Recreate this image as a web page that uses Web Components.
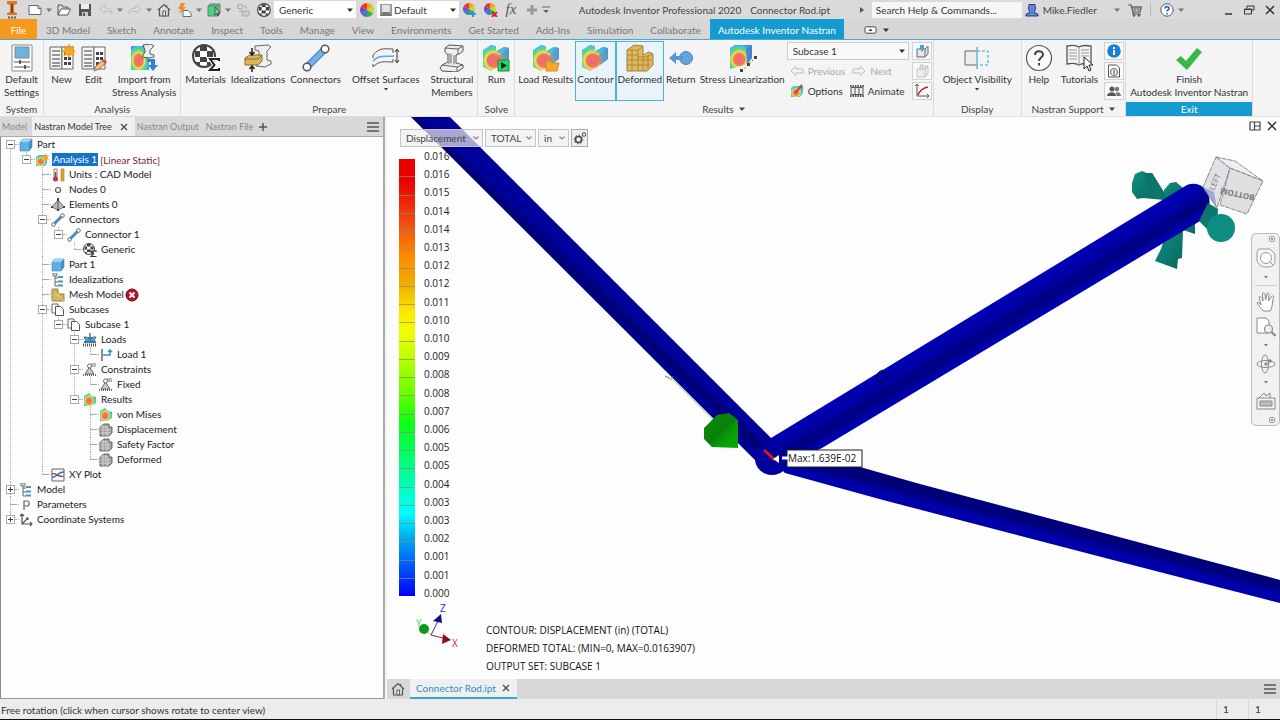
<!DOCTYPE html>
<html lang="en">
<head>
<meta charset="utf-8">
<title>Autodesk Inventor Professional 2020</title>
<style>
    html, body {
        height: 100%;
        margin: 0;
    }
    body {
        font: 10px/14px Lato, "Open Sans", sans-serif;
        color: #333;
        overflow: hidden;
    }
</style>
</head>
<body>
<inventor-app></inventor-app>

<script>
// ---------- icons ----------
const RAINBOW = '<defs><radialGradient id="rb" cx=".42" cy=".6" r=".65"><stop offset="0" stop-color="#ee6a6a"/><stop offset=".38" stop-color="#f07a60"/><stop offset=".5" stop-color="#f5e04a"/><stop offset=".68" stop-color="#57d984"/><stop offset=".85" stop-color="#41c4e4"/><stop offset="1" stop-color="#4f8fd8"/></radialGradient></defs>';
const WHEEL = (r) => `<g transform="translate(${r} ${r}) scale(${r / 7})"><path fill="#e8382f" d="M0 0L0-7A7 7 0 0 0-6-3.500z"/><path fill="#f5a31d" d="M0 0L0-7A7 7 0 0 1 6-3.500z"/><path fill="#c4d92e" d="M0 0L6-3.500A7 7 0 0 1 6 3.500z"/><path fill="#2fb34a" d="M0 0L6 3.500A7 7 0 0 1 0 7z"/><path fill="#2f7fd8" d="M0 0L0 7A7 7 0 0 1-6 3.500z"/><path fill="#8a3fc0" d="M0 0L-6 3.500A7 7 0 0 1-6-3.500z"/></g>`;
const BALL = '<circle cx="12" cy="12" r="11" fill="#fff" stroke="#444" stroke-width="2"/><path fill="#444" d="M8 2h7v5H8zM3 7h5v6H3zM15 7h6v6h-6zM8 13h7v5H8zM4 18h4v3H4zM15 18h4v3h-4z"/>';
const SHEET = '<path d="M1 3h12v22H1z" fill="#f4f4f4" stroke="#666"/><path d="M3 7h8M3 11h8M3 15h8M3 19h8M3 22h8" stroke="#777" stroke-width="1.500"/><path d="M13 3h11v22H13z" fill="#fff" stroke="#666"/><path fill="#444" d="M15 8h3v3h-3zM19 8h3v3h-3zM15 13h3v3h-3zM19 13h3v3h-3zM15 18h3v3h-3zM19 18h3v3h-3z"/>';
const BEAM = '<path d="M7 4l4-3 14 1v5l-4 3-3 1v8l7 2v3l-6 4-15-1-2-3 2-3 6-3v-7L7 8z" fill="#eee" stroke="#555"/><path d="M7 4l13 1 5-3M20 5v5M4 21l15 2 6-2M19 23v5" fill="none" stroke="#666"/><path d="M10 9l4 1v9l-4 1zM15 11l3 0v8l-3 2z" fill="#a8a8a8"/>';
const BLOCK = RAINBOW + '<path d="M1 6l8-5 5 1v5l8-4 5 1v11l-9 7-9 5-8-4z" fill="url(#rb)"/><path d="M14 8l8-5 5 1-8 6z" fill="#45b8e0" opacity=".8"/><path d="M27 4v11l-8 6V10z" fill="#5b8fce" opacity=".75"/><path d="M7 12c3-3 6-1 7 0 2 1 3 0 5-2v7c-3 4-9 6-12 3-2-2-2-6 0-8z" fill="#ec6f6c" opacity=".8"/>';
const PAPERS = '<path d="M1 1h6v3M1 1v9h3" fill="none" stroke="#666"/><path d="M4.500 3.500h5l3 3v6h-8z" fill="#fff" stroke="#555"/>';
const SUPPORT = '<path d="M6.500 4L2 11h9z" fill="#ccc" stroke="#666"/><circle cx="6.500" cy="3" r="2" fill="#fff" stroke="#666"/><path d="M8 1h5M8 3h5" stroke="#777"/><path d="M0 12h13" stroke="#666" stroke-width="2" stroke-dasharray="1 1"/>';
const MESH = '<path d="M1 4l4-3h5v3h3v6l-3 3H1z" fill="#999" stroke="#666"/><path d="M1 4h8v9M1 7h11M1 10h11M4 2v11M7 2v11" stroke="#ddd" fill="none" stroke-width=".8"/>';

const ICONS = {
    inventor: [14, 18, '<path d="M2 0h10v3L9 4v7l3 1v2H2v-2l3-1V4L2 3z" fill="#d9772b"/><path d="M6 3h2v9H6z" fill="#8f4312"/><path d="M3 16.500h2M6 16.500h2M9 16.500h2" stroke="#555" stroke-width="2"/>'],
    newdoc: [14, 14, '<path d="M1 2.500h9l3 3v6H1z" fill="#fff" stroke="#666"/><path d="M10 2.500v3h3" fill="none" stroke="#666"/>'],
    open: [14, 14, '<path d="M1 12V2h4l1 2h5v3" fill="none" stroke="#555"/><path d="M1 12l3-6h9.500l-3 6z" fill="#fff" stroke="#555"/>'],
    save: [14, 14, '<path d="M1 1h12v12H1z" fill="#555"/><path d="M3 1h8v5H3z" fill="#eee"/><path d="M4 9h6v4H4z" fill="#ccc"/><path d="M5 10h2v3H5z" fill="#555"/>'],
    undo: [14, 14, '<path d="M1 6l5-4v3c5 0 7 2 7 6-2-3-4-3-7-3v2z" fill="#ddd" stroke="#bbb"/>'],
    redo: [14, 14, '<path d="M13 6L8 2v3C3 5 1 7 1 11c2-3 4-3 7-3v2z" fill="#ddd" stroke="#bbb"/>'],
    home: [14, 14, '<path d="M1 7l6-5.500L13 7M2.500 6.500v6.500h9V6.500M9.500 2v2" fill="none" stroke="#555" stroke-width="1.200"/><path d="M6 8h2.500v5H6z" fill="#fff" stroke="#555"/>'],
    bolt: [15, 14, '<path d="M4 0h4L6 4h3L2 11l2-5H1z" fill="#f08a1d"/><path d="M6 7.500h5l3 3v3H6z" fill="#fff" stroke="#666"/>'],
    body: [14, 14, '<path d="M1 3l2-2h10v9l-2 3H1z" fill="#3fd97c" stroke="#777"/><path d="M10 3v10M1 3h9l2-2" fill="none" stroke="#777"/><path d="M8 4v8l2-2 1 3 1-1-1-2h2z" stroke="#333" fill="#bbb" stroke-width=".7"/>'],
    chain: [14, 14, '<path d="M2 1.500h4v4H2zM7 3h3v3M3 8h3" fill="none" stroke="#aaa"/><path d="M6 8h7v5H6z" fill="#ccc" stroke="#aaa"/>'],
    ball: [14, 14, '<g transform="scale(.58)">' + BALL + '</g>'],
    wheel: [14, 14, WHEEL(7)],
    wheelAdd: [14, 14, WHEEL(6) + '<path d="M10 8v6M7 11h6" stroke="#3b8fd6" stroke-width="2"/>'],
    wheelDel: [14, 14, WHEEL(6) + '<path d="M8 9l5 5M13 9l-5 5" stroke="#dd2222" stroke-width="2"/>'],
    swatch: [12, 12, '<path d="M0 0h12v12H0z" fill="#9a9a9a"/><path d="M2 1h8v7H2z" fill="#e2e2e2"/><path d="M0 12l3-4h6l3 4z" fill="#777"/>'],
    plus: [14, 14, '<path d="M7 2v10M2 7h10" stroke="#999" stroke-width="3"/>'],
    plusThin: [10, 10, '<path d="M5 1v8M1 5h8" stroke="#555" stroke-width="1.500"/>'],
    caret: [8, 8, '<path d="M1 2.500h6L4 6z" fill="currentColor"/>'],
    caretSm: [6, 6, '<path d="M1 2h4L3 4.500z" fill="currentColor"/>'],
    chevron: [8, 8, '<path d="M1.500 2.500L4 5l2.500-2.500" fill="none" stroke="#888" stroke-width="1.200"/>'],
    caretBar: [8, 8, '<path d="M0 1h8" stroke="#666"/><path d="M1 4h6L4 7z" fill="#666"/>'],
    right: [8, 8, '<path d="M3 1l4 3-4 3z" fill="#555"/>'],
    user: [14, 14, '<path d="M4 1.500h6l.5 5-1.500 3 4 1.500v2H1v-2L5 9.500l-1.500-3z" fill="#5f86d6" stroke="#27407f"/>'],
    cart: [14, 14, '<path d="M0 2h3l2 7h7l1.500-5H4M5 9v2h8" fill="none" stroke="#555" stroke-width="1.200"/><path d="M4 4h9M5 6h8M7 4v5M10 4v5" stroke="#777"/><circle cx="6" cy="12.500" r="1.200" fill="#555"/><circle cx="11" cy="12.500" r="1.200" fill="#555"/>'],
    helpBlue: [14, 14, '<circle cx="7" cy="7" r="6.200" fill="#fff" stroke="#556"/><path d="M5 5.500C5 3 9 3 9 5.500 9 7 7 7 7 8.500M7 10v1.500" fill="none" stroke="#2462c8" stroke-width="1.600"/>'],
    min: [14, 14, '<path d="M4 11h7" stroke="#333" stroke-width="1.500"/>'],
    restore: [14, 14, '<path d="M5 5V3h7v4h-2" fill="none" stroke="#333"/><path d="M2.500 6h7v5h-7z" fill="none" stroke="#333"/><path d="M2.500 6.500h7" stroke="#333"/>'],
    close: [14, 14, '<path d="M3 3l8 8M11 3l-8 8" stroke="#333" stroke-width="1.500"/>'],
    closeSm: [10, 10, '<path d="M2 2l6 6M8 2L2 8" stroke="#444" stroke-width="1.200"/>'],
    ribbonState: [14, 8, '<rect x="1" y=".8" width="11" height="6.400" rx="1.500" fill="#fff" stroke="#444"/><path d="M4.500 5h4l-2-2.500z" fill="#333"/>'],

    settings: [26, 28, '<path d="M3 1h20v26H3z" fill="#fff" stroke="#888"/><path d="M6 3h14v11H6z" fill="#6ab4e4" stroke="#888"/><path d="M5 18h16M5 23h16" stroke="#555"/><path d="M11 16v4M16 21v4" stroke="#333" stroke-width="1.500"/>'],
    analysisNew: [26, 28, SHEET + '<path d="M20 0l1.500 4L25 2l-1 4 3 1-3 2 1 3-3.500-1.500L20 14l-1.500-3.500L15 12l1-3-3-2 3-1-1-4 3.500 2z" fill="#f5a623" stroke="#d98a10" stroke-width=".5"/>'],
    analysisEdit: [26, 28, SHEET + '<path d="M13 27l2-5 7-6 3 3-7 6z" fill="#f3c36a" stroke="#a66"/><path d="M21 17l2-2 3 3-2 2z" fill="#d04848"/>'],
    importStress: [28, 28, RAINBOW + '<path d="M1 2h18v24H1z" fill="url(#rb)"/><path d="M13 1l8-1 3 2-4 4v4l4 1v2l-5 1-7-1 3-5V6z" fill="#eee" stroke="#555"/><path d="M17 15h8v6h3l-5 6-5-6h3v-3h-4z" fill="#2f83d6"/>'],
    materials: [28, 28, '<g>' + BALL + '</g><path d="M27 17v-2h-9l4.500 6L18 26h9v-2" fill="none" stroke="#fff" stroke-width="4"/><path d="M27 17v-2h-9l4.500 6L18 26h9v-2" fill="none" stroke="#222" stroke-width="2"/>'],
    idealize: [28, 28, '<path d="M11 2l13-1 3 2-4 4v9l4 1v3l-6 3-9-1 3-6V7l-4-1z" fill="#eee" stroke="#666"/><path d="M1 14l5-3h12v6l-4 4H1z" fill="#d9b65c" stroke="#8a6d28"/><path d="M1 15h13l4-4" fill="none" stroke="#8a6d28"/><path d="M8 4v6M5.500 8L8 11l2.500-3M8 28v-6M5.500 25L8 22l2.500 3" fill="none" stroke="#222" stroke-width="1.500"/>'],
    connector: [28, 28, '<path d="M6 22L22 6" stroke="#4a7fb5" stroke-width="7"/><path d="M6 22L22 6" stroke="#6fb1ea" stroke-width="5"/><circle cx="5" cy="23" r="3.800" fill="#fff" stroke="#555" stroke-width="1.500"/><circle cx="23" cy="5" r="3.800" fill="#fff" stroke="#555" stroke-width="1.500"/>'],
    offset: [28, 28, '<path d="M1 11c7-8 11-6 20-6v4M1 23c7-7 11-5 20-5v-3M1 11v3M1 23v-3" fill="none" stroke="#555"/><path d="M1 17c7-7 11-4 21-5" fill="none" stroke="#5aa7e0" stroke-width="1.500"/><path d="M25 6v12M23 8l2-3 2 3M23 16l2 3 2-3" fill="none" stroke="#333"/>'],
    beam: [28, 28, BEAM],
    run: [28, 28, BLOCK + '<path d="M16 16h11v11H16z" fill="#33d164" stroke="#1a8a3a"/><path d="M19 18v7l6-3.500z" fill="#0b2a12"/>'],
    load: [28, 28, BLOCK + '<path d="M14 17h5l1 2h7l-2 8H14z" fill="#f5a92e" stroke="#d98c14"/>'],
    contour: [28, 28, BLOCK],
    deformed: [28, 28, '<path d="M1 6l7-5 9 1v9l6-3 4 2v11l-6 6H1z" fill="#dcb85f" stroke="#a5822f"/><path d="M1 11h11M1 16h25M1 21h23M6 5v22M12 6v21M17 12v15M22 11v14M1 6h11l5-4M12 13h8l7-3" fill="none" stroke="#a5822f" stroke-width=".8"/>'],
    back: [26, 28, '<circle cx="18" cy="14" r="6.500" fill="#64a5dc" stroke="#4886c0"/><path d="M15 12v4H8v4L1 14l7-6v4z" fill="#5499d8"/>'],
    linear: [30, 28, RAINBOW + '<path d="M3 4l5-3h17v13l-4 6L3 25z" fill="url(#rb)"/><path d="M19 5l6-4v13l-5 6z" fill="#4a86d0"/><path d="M15 27l13-13" stroke="#555" stroke-dasharray="1.500 2"/><path d="M13 25h3v3h-3zM20 19h3v3h-3zM27 12h3v3h-3z" fill="#444"/>'],
    prev: [14, 12, '<path d="M1 6l5-4.500V4h7v4H6v2.500z" fill="#f4f4f4" stroke="#bbb"/>'],
    next: [14, 12, '<path d="M13 6L8 1.500V4H1v4h7v2.500z" fill="#f4f4f4" stroke="#bbb"/>'],
    options: [14, 14, RAINBOW + '<path d="M1 4l3-2h9v7l-3 4H1z" fill="url(#rb)"/><path d="M5 9l7-8" stroke="#c44" stroke-width="2"/>'],
    film: [14, 12, '<path d="M0 1h14M0 11h14" stroke="#555" stroke-width="2" stroke-dasharray="1.500 1"/><path d="M1 2.500h12v7H1zM5 2.500v7M9 2.500v7" fill="#eee" stroke="#555"/>'],
    probe: [14, 14, '<path d="M2 5h8v8H2zM10 5l3-3v8l-3 3" fill="#e8e8e8" stroke="#666"/><path d="M5 1h4v4L7 8 5 5z" fill="#4f9fd8"/>'],
    probes: [14, 14, '<path d="M2 5h8v8H2zM10 5l3-3v8l-3 3" fill="#eee" stroke="#c4c4c4"/><path d="M5 1h3v5H5zM9 1l4 4M13 1L9 5" stroke="#c4c4c4" fill="#ddd"/>'],
    plot: [14, 14, '<path d="M2 0v12h12M0 2l2-2 2 2M12 10l2 2-2 2" fill="none" stroke="#555"/><path d="M3 11C5 6 8 4 13 3" fill="none" stroke="#b32828" stroke-width="1.500"/>'],
    visibility: [28, 28, '<path d="M13 7H2v14h11" fill="#eee" stroke="#666"/><path d="M14 7h11v14H14" fill="none" stroke="#2fa0d8" stroke-dasharray="3 2"/><path d="M14 3v22" stroke="#2f8fd0"/>'],
    help: [28, 28, '<circle cx="14" cy="14" r="12.500" fill="#fafafa" stroke="#555" stroke-width="1.200"/><path d="M10 11c0-5 8-5 8-.5 0 3-4 3-4 6.500M14 19v2.500" fill="none" stroke="#444" stroke-width="2"/>'],
    book: [28, 28, '<path d="M2 2c5-1 9-1 12 1 3-2 6-2 12-1v18c-6-1-9-1-12 1-3-2-7-2-12-1z" fill="#f4f4f4" stroke="#555" stroke-width="1.300"/><path d="M14 3v18M4 6h8M4 9h8M4 12h8M4 15h8M16 6h8M16 9h8M16 12h8" stroke="#999"/><path d="M19 13v12l3-3 2 5 2-1-2-5h4z" fill="#fff" stroke="#222"/>'],
    info: [14, 14, '<circle cx="7" cy="7" r="6.800" fill="#1c7fd4"/><path d="M7 6v5M7 3v2" stroke="#fff" stroke-width="2"/>'],
    docInfo: [14, 14, '<path d="M1.500 1h8l3 3v9h-11z" fill="#fff" stroke="#555"/><circle cx="7" cy="8" r="3.500" fill="none" stroke="#555"/><path d="M7 6v4" stroke="#555" stroke-width="1.200"/>'],
    people: [14, 14, '<circle cx="5" cy="5" r="2.500" fill="#555"/><path d="M0 12c0-5 9-5 9 0z" fill="#555"/><circle cx="10" cy="5" r="2.200" fill="#777"/><path d="M9.500 12c0-2-.5-3-1-3.500 3-1 5.500.5 5.500 3.500z" fill="#777"/>'],
    check: [28, 28, '<path d="M1 16l5-4 5 5L22 4l5 4-15 18z" fill="#34b94a"/>'],

    cube: [14, 14, '<path d="M1 4l3-3h9v8l-3 4H1z" fill="#5fb0e6" stroke="#3d87bd" stroke-width=".6"/><path d="M1 4l3-3h9l-3 3z" fill="#9bd2f5"/><path d="M10 4l3-3v8l-3 4z" fill="#3f8fcb"/>'],
    study: [14, 14, RAINBOW + '<path d="M1 4l3-2h8v8l-2 3H1z" fill="url(#rb)"/><path d="M10 0l1 2.500L14 2l-1.500 2.500L14 7l-3-1-2 2V5L6.500 4 9 3z" fill="#f5a623"/>'],
    units: [14, 14, '<path d="M3 1h3v8H3z" fill="#eee" stroke="#888"/><path d="M4.500 4v6" stroke="#b33" stroke-width="1.500"/><circle cx="4.500" cy="11" r="2.500" fill="#b33a3a"/><path d="M10 1h3v12h-3z" fill="#e0a030" stroke="#a87818" stroke-width=".6"/>'],
    node: [14, 14, '<circle cx="7" cy="7" r="2.500" fill="#fff" stroke="#555" stroke-width="1.200"/>'],
    element: [14, 14, '<path d="M7 2l6 7-6 3-6-3z" fill="#bbb" stroke="#666"/><path d="M7 2v10" stroke="#555"/><path d="M6 0h2v3H6zM0 8h2v2H0zM12 8h2v2h-2zM6 11h2v2H6z" fill="#444"/>'],
    connectorSm: [14, 14, '<path d="M3 11l8-8" stroke="#4a8cc4" stroke-width="3"/><circle cx="2.500" cy="11.500" r="1.800" fill="#fff" stroke="#666"/><circle cx="11.500" cy="2.500" r="1.800" fill="#fff" stroke="#666"/>'],
    materialSm: [14, 14, '<g transform="scale(.5)">' + BALL + '</g><path d="M13 9V8H8l2.500 3L8 13.500h5.500" fill="none" stroke="#333" stroke-width="1.200"/>'],
    struct: [14, 14, '<path d="M2 0h4v3H2z" fill="#ddd" stroke="#777"/><path d="M4 3v10h3M4 5h3M4 9h3" fill="none" stroke="#666"/><path d="M7 4h5M7 8.500h5M7 12.500h5" stroke="#4d94c8" stroke-width="2.200"/>'],
    meshModel: [14, 14, '<path d="M1 1h6v5h6v7H1z" fill="#cdb05a" stroke="#9b8136"/><path d="M1 1l12 12M1 7l6-1M7 6v7M1 13l6-7 6 7" stroke="#e8d592" stroke-width=".7" fill="none"/>'],
    papers: [14, 14, PAPERS],
    loads: [14, 14, '<path d="M7 0v6M5 4l2 3 2-3" fill="none" stroke="#222"/><path d="M1 4h3l3 3 3-3h3l-2 4H3z" fill="#5aa7d8" stroke="#3a7fb0"/><path d="M1 9h12" stroke="#3a7fb0" stroke-width="2"/><path d="M0 12h14" stroke="#555" stroke-width="3" stroke-dasharray="1 1"/>'],
    load1: [14, 14, '<path d="M3 1v12" stroke="#666" stroke-width="1.500"/><path d="M4 7h7V2M9 4l2-2 2 2" stroke="#3a8fb8" stroke-width="1.500" fill="none"/>'],
    support: [14, 14, SUPPORT],
    results: [14, 14, RAINBOW + '<path d="M1 3l5-3 3 3 4 1v6l-5 3H1z" fill="url(#rb)"/>'],
    mesh: [14, 14, MESH],
    xy: [14, 14, '<path d="M1 1h12v12H1z" fill="#f6fbff" stroke="#666"/><path d="M1 9c4 2 6-6 12-5" fill="none" stroke="#3a6fb8" stroke-width="1.500"/><path d="M1 6c4-2 6 4 12 2" fill="none" stroke="#b33" stroke-width="1.300"/>'],
    param: [14, 14, '<path d="M5 12V3h3c3 0 3 5 0 5H5" fill="none" stroke="#666" stroke-width="1.200"/>'],
    coords: [14, 14, '<path d="M3 1v10h10M1 3l2-2 2 2M11 9l2 2-2 2M3 11l6-6M7 5h2v2" fill="none" stroke="#555" stroke-width="1.200"/>'],
    error: [14, 14, '<circle cx="7" cy="7" r="6" fill="#b3141f" stroke="#700a10"/><path d="M4.500 4.500l5 5M9.500 4.500l-5 5" stroke="#fff" stroke-width="2"/>'],

    menu: [14, 14, '<path d="M1 3h12M1 7h12M1 11h12" stroke="#555" stroke-width="1.500"/>'],
    gears: [14, 14, '<circle cx="5.500" cy="8.500" r="3" fill="none" stroke="#444" stroke-width="1.500"/><circle cx="5.500" cy="8.500" r="4.300" fill="none" stroke="#444" stroke-dasharray="1.500 1.800"/><circle cx="11" cy="3.500" r="1.800" fill="none" stroke="#444"/>'],
    tile: [12, 10, '<path d="M1 1h10v8H1zM5.500 1v8M5.500 5h5.500" fill="none" stroke="#444" stroke-width="1.200"/>'],
    dot: [8, 8, '<circle cx="4" cy="4" r="2.800" fill="#eee" stroke="#999"/><path d="M3 3l2 2M5 3L3 5" stroke="#999"/>'],
    steer: [20, 20, '<path d="M4 1h10l5 5v7c0 4-3 6-8 6S1 17 1 11V5c0-2 1-4 3-4z" fill="#f6f6f6" stroke="#999"/><circle cx="10" cy="10" r="5.500" fill="#fff" stroke="#999"/><path d="M14 14l3 3" stroke="#999"/>'],
    hand: [20, 20, '<path d="M8 19c-3-2-5-5-7-8 1-1 3 0 4 2L3 5c1-1 2 0 3 1l1 3-.5-7C7 .5 8.500 1 9 2l.5 6L11 1.500c1-1 2 0 2 1L12.500 9 16 4c1-.5 2 .5 1.500 1.500C16 10 17 15 14 19z" fill="#fff" stroke="#888"/>'],
    zoom: [20, 20, '<path d="M1 1h9l3 3v12H1z" fill="#fff" stroke="#888"/><circle cx="12.500" cy="12" r="4" fill="#eee" stroke="#888" stroke-width="1.200"/><path d="M15.500 15l4 4" stroke="#888" stroke-width="2.200"/>'],
    orbit: [20, 20, '<ellipse cx="9" cy="10" rx="3.500" ry="9" fill="none" stroke="#888"/><ellipse cx="10" cy="10" rx="9" ry="3.500" fill="none" stroke="#888"/><path d="M8 10h4M10 8v4M14 5v4M12 7h4" stroke="#777"/>'],
    look: [20, 20, '<path d="M1 7h18v11H1z" fill="#f2f2f2" stroke="#888"/><path d="M4 10h12v5H4z" fill="#bbb" stroke="#888"/><path d="M3 7l5-5 2 3 4-3v5" fill="none" stroke="#888"/>'],
};

class UiIcon extends HTMLElement {
    constructor() {
        super();
        this.attachShadow({mode: 'open'});
    }
    connectedCallback() {
        const [w, h, body] = ICONS[this.getAttribute('name')];
        this.shadowRoot.innerHTML = `
            <style>
                :host { display: inline-flex; flex: none; }
                svg { display: block; }
            </style>
            <svg width="${w}" height="${h}" viewBox="0 0 ${w} ${h}" aria-hidden="true">${body}</svg>
        `;
    }
}
customElements.define('ui-icon', UiIcon);

// ---------- small controls ----------
class UiSelect extends HTMLElement {
    constructor() {
        super();
        this.attachShadow({mode: 'open'});
    }
    connectedCallback() {
        const icon = this.getAttribute('icon');
        this.shadowRoot.innerHTML = `
            <style>
                :host { display: flex; align-items: center; box-sizing: border-box; background: #fff; padding-right: 2px; }
                label { display: flex; align-items: center; flex: 1; min-width: 0; padding-left: 3px; }
                select { appearance: none; flex: 1; min-width: 0; border: 0; margin: 0; padding: 0 2px; background: transparent; font: inherit; color: inherit; outline-color: #1d9fd2; }
                .caret { pointer-events: none; }
            </style>
            <label>${icon ? `<ui-icon name="${icon}"></ui-icon>` : ''}<select aria-label="${this.getAttribute('label')}"><option>${this.getAttribute('value')}</option></select></label>
            <ui-icon class="caret" name="${this.getAttribute('arrow') || 'caret'}"></ui-icon>
        `;
    }
}
customElements.define('ui-select', UiSelect);

class ToolButton extends HTMLElement {
    constructor() {
        super();
        this.attachShadow({mode: 'open'});
    }
    connectedCallback() {
        this.shadowRoot.innerHTML = `
            <style>
                :host { display: flex; width: 21px; }
                :host([icon^="caret"]) { width: 8px; color: #777; }
                :host([fit]) { width: auto; }
                button { display: flex; flex: 1; align-items: center; justify-content: center; gap: 4px; border: 0; padding: 0; background: none; color: inherit; font: inherit; }
                button:hover { background: #cfe8f5; }
            </style>
            <button title="${this.getAttribute('label')}" aria-label="${this.getAttribute('label')}">
                <ui-icon name="${this.getAttribute('icon')}"></ui-icon>
                <slot></slot>
            </button>
        `;
    }
}
customElements.define('tool-button', ToolButton);

// ---------- title bar ----------
class TitleBar extends HTMLElement {
    constructor() {
        super();
        this.attachShadow({mode: 'open'}).innerHTML = `
            <style>
                :host { display: flex; height: 19px; background: #dadada; color: #444; align-items: stretch; }
                .logo { display: flex; width: 24px; align-items: center; justify-content: center; }
                ui-select { width: 82px; height: 17px; align-self: center; color: #333; }
                .title { display: flex; flex: 1; align-items: center; justify-content: center; gap: 9px; white-space: nowrap; padding-left: 8px; }
                input { width: 150px; height: 16px; align-self: center; box-sizing: border-box; border: 0; background: #f6f6f6; font: inherit; padding: 0 4px; }
                input::placeholder { color: #333; opacity: 1; }
                .fx { width: 20px; font: italic 15px/17px "Liberation Serif", serif; color: #555; border: 0; padding: 0; background: none; }
                .user { padding-right: 16px; }
                .account { padding-left: 3px; }
                .store { padding-left: 7px; }
                .window { padding-left: 32px; }
                .sep { width: 1px; margin: 3px 5px 3px 8px; background: #bbb; }
            </style>
            <div class="logo"><ui-icon name="inventor"></ui-icon></div>
            <tool-button icon="newdoc" label="New file"></tool-button><tool-button icon="caret" label="New options"></tool-button>
            <tool-button icon="open" label="Open"></tool-button>
            <tool-button icon="save" label="Save"></tool-button>
            <tool-button icon="undo" label="Undo"></tool-button><tool-button icon="caret" label="Undo list"></tool-button>
            <tool-button icon="redo" label="Redo"></tool-button><tool-button icon="caret" label="Redo list"></tool-button>
            <tool-button icon="home" label="Home"></tool-button>
            <tool-button icon="bolt" label="Update"></tool-button><tool-button icon="caret" label="Update options"></tool-button>
            <tool-button icon="body" label="Select"></tool-button><tool-button icon="caret" label="Select options"></tool-button>
            <tool-button icon="chain" label="Relationships"></tool-button>
            <tool-button icon="ball" label="Material"></tool-button>
            <ui-select label="Material" value="Generic"></ui-select>
            <tool-button icon="wheel" label="Appearance"></tool-button>
            <ui-select label="Appearance" value="Default" icon="swatch"></ui-select>
            <tool-button icon="wheelAdd" label="Adjust appearance"></tool-button>
            <tool-button icon="wheelDel" label="Clear appearance"></tool-button>
            <button class="fx" aria-label="Parameters">fx</button>
            <tool-button icon="plus" label="Add"></tool-button>
            <tool-button icon="caretBar" label="Customize"></tool-button>
            <div class="title"><span>Autodesk Inventor Professional 2020</span><span>Connector Rod.ipt</span></div>
            <tool-button icon="right" label="Expand search"></tool-button>
            <input type="search" placeholder="Search Help &amp; Commands..." aria-label="Search Help and Commands">
            <tool-button class="account" icon="user" label="Account" fit><span class="user">Mike.Fiedler</span></tool-button>
            <tool-button icon="caret" label="Account menu"></tool-button>
            <tool-button class="store" icon="cart" label="App store" fit></tool-button>
            <i class="sep"></i>
            <tool-button icon="helpBlue" label="Help"></tool-button>
            <tool-button icon="caret" label="Help menu"></tool-button>
            <tool-button class="window" icon="min" label="Minimize"></tool-button>
            <tool-button icon="restore" label="Restore"></tool-button>
            <tool-button icon="close" label="Close"></tool-button>
        `;
    }
}
customElements.define('title-bar', TitleBar);

// ---------- ribbon ----------
class RibbonTabs extends HTMLElement {
    constructor() {
        super();
        const tabs = ['3D Model', 'Sketch', 'Annotate', 'Inspect', 'Tools', 'Manage', 'View', 'Environments', 'Get Started', 'Add-Ins', 'Simulation', 'Collaborate'];
        this.attachShadow({mode: 'open'}).innerHTML = `
            <style>
                :host { display: block; background: #d6d6d6; border-bottom: 1px solid #4ba9cf; }
                nav { display: flex; height: 20px; align-items: stretch; gap: 1px; }
                button { border: 0; padding: 2px 8px 0; background: none; font: inherit; color: #777; white-space: nowrap; }
                .file { width: 37px; background: #f7991c; color: #fff; }
                .on { background: #149bd0; color: #fff; }
                tool-button { padding: 2px 0 0 16px; width: 20px; }
                tool-button[icon="caret"] { padding-left: 0; width: 8px; color: #333; }
            </style>
            <nav role="tablist">
                <button class="file" role="tab">File</button>
                ${tabs.map((t) => `<button role="tab">${t}</button>`).join('')}
                <button class="on" role="tab" aria-selected="true">Autodesk Inventor Nastran</button>
                <tool-button icon="ribbonState" label="Ribbon state"></tool-button>
                <tool-button icon="caret" label="Ribbon options"></tool-button>
            </nav>
        `;
    }
}
customElements.define('ribbon-tabs', RibbonTabs);

class RibbonButton extends HTMLElement {
    constructor() {
        super();
        this.attachShadow({mode: 'open'});
    }
    connectedCallback() {
        this.shadowRoot.innerHTML = `
            <style>
                :host { display: flex; }
                :host([more]) { padding: 0 var(--more-pad, 0); }
                button { display: flex; flex-direction: column; align-items: center; box-sizing: border-box; height: 60px; border: 1px solid transparent; padding: 2px 1px 0; background: none; font: inherit; color: #333; line-height: 13px; white-space: pre; min-width: 31px; }
                :host([pressed]) button { background: #e8f3fa; border-color: #4fb0d6; }
                span { margin-top: 1px; }
            </style>
            <button ${this.hasAttribute('pressed') ? 'aria-pressed="true"' : ''}>
                <ui-icon name="${this.getAttribute('icon')}"></ui-icon>
                <span><slot></slot></span>
                ${this.hasAttribute('more') ? '<ui-icon name="caretSm"></ui-icon>' : ''}
            </button>
        `;
    }
}
customElements.define('ribbon-button', RibbonButton);

class RibbonPanel extends HTMLElement {
    constructor() {
        super();
        this.attachShadow({mode: 'open'});
    }
    connectedCallback() {
        this.shadowRoot.innerHTML = `
            <style>
                :host { display: flex; flex-direction: column; border-right: 1px solid #dcdcdc; }
                .body { display: flex; flex: 1; gap: var(--gap, 1px); padding: 1px var(--pad, 2px) 0; justify-content: center; align-items: flex-start; }
                .name { display: flex; height: 14px; align-items: center; justify-content: center; gap: 4px; color: #444; }
                :host([accent]) .name { background: #149bd0; color: #fff; }
            </style>
            <div class="body"><slot></slot></div>
            <div class="name">${this.getAttribute('name')}${this.hasAttribute('more') ? '<ui-icon name="caret"></ui-icon>' : ''}</div>
        `;
    }
}
customElements.define('ribbon-panel', RibbonPanel);

class MiniButtons extends HTMLElement {
    constructor() {
        super();
        this.attachShadow({mode: 'open'}).innerHTML = `
            <style>
                :host { display: flex; flex-direction: column; gap: 2px; padding-top: 1px; }
                ::slotted(tool-button) { box-sizing: border-box; width: 20px; height: 18px; border: 1px solid #d2d2d2; background: #f9f9f9; }
            </style>
            <slot></slot>
        `;
    }
}
customElements.define('mini-buttons', MiniButtons);

class RibbonBar extends HTMLElement {
    constructor() {
        super();
        this.attachShadow({mode: 'open'}).innerHTML = `
            <style>
                :host { display: flex; height: 77px; background: #f4f4f4; border-bottom: 1px solid #ddd; box-sizing: border-box; overflow: hidden; }
                .prepare { --more-pad: 6px; }
                .results { --gap: 0px; --pad: 1px; }
                .display { --pad: 7px; }
                .support { --gap: 4px; --pad: 1px; }
                .stack { display: flex; flex-direction: column; gap: 2px; padding-top: 1px; width: 122px; margin-right: 3px; }
                .stack div { display: flex; height: 18px; gap: 7px; padding: 0 3px; }
                .stack .off { color: #aaa; }
                .stack ui-select { border: 1px solid #ccc; height: 18px; background: #f9f9f9; }
            </style>
            <ribbon-panel name="System"><ribbon-button icon="settings">Default
Settings</ribbon-button></ribbon-panel>
            <ribbon-panel name="Analysis"><ribbon-button icon="analysisNew">New</ribbon-button><ribbon-button icon="analysisEdit">Edit</ribbon-button><ribbon-button icon="importStress">Import from
Stress Analysis</ribbon-button></ribbon-panel>
            <ribbon-panel class="prepare" name="Prepare"><ribbon-button icon="materials">Materials</ribbon-button><ribbon-button icon="idealize">Idealizations</ribbon-button><ribbon-button icon="connector">Connectors</ribbon-button><ribbon-button icon="offset" more>Offset Surfaces</ribbon-button><ribbon-button icon="beam">Structural
Members</ribbon-button></ribbon-panel>
            <ribbon-panel name="Solve"><ribbon-button icon="run">Run</ribbon-button></ribbon-panel>
            <ribbon-panel class="results" name="Results" more>
                <ribbon-button icon="load">Load Results</ribbon-button><ribbon-button icon="contour" pressed>Contour</ribbon-button><ribbon-button icon="deformed" pressed>Deformed</ribbon-button><ribbon-button icon="back">Return</ribbon-button><ribbon-button icon="linear">Stress Linearization</ribbon-button>
                <section class="stack">
                    <ui-select label="Subcase" value="Subcase 1"></ui-select>
                    <div class="off"><tool-button fit icon="prev" label="Previous">Previous</tool-button><tool-button fit icon="next" label="Next">Next</tool-button></div>
                    <div><tool-button fit icon="options" label="Options">Options</tool-button><tool-button fit icon="film" label="Animate">Animate</tool-button></div>
                </section>
                <mini-buttons><tool-button icon="probe" label="Probe"></tool-button><tool-button icon="probes" label="Clear probes"></tool-button><tool-button icon="plot" label="XY plot"></tool-button></mini-buttons>
            </ribbon-panel>
            <ribbon-panel class="display" name="Display"><ribbon-button icon="visibility" more>Object Visibility</ribbon-button></ribbon-panel>
            <ribbon-panel class="support" name="Nastran Support" more><ribbon-button icon="help">Help</ribbon-button><ribbon-button icon="book">Tutorials</ribbon-button>
                <mini-buttons><tool-button icon="info" label="About"></tool-button><tool-button icon="docInfo" label="Release notes"></tool-button><tool-button icon="people" label="Community"></tool-button></mini-buttons>
            </ribbon-panel>
            <ribbon-panel name="Exit" accent><ribbon-button icon="check">Finish
Autodesk Inventor Nastran</ribbon-button></ribbon-panel>
        `;
    }
}
customElements.define('ribbon-bar', RibbonBar);

// ---------- model tree ----------
class TreeItem extends HTMLElement {
    constructor() {
        super();
        this.attachShadow({mode: 'open'});
    }
    connectedCallback() {
        const parent = this.hasAttribute('open') || this.hasAttribute('closed');
        this.shadowRoot.innerHTML = `
            <style>
                :host {
                    display: block;
                    --dots: repeating-linear-gradient(#aaa 0 1px, transparent 1px 2px);
                    background: var(--dots) 8px 0 / 1px 100% no-repeat;
                }
                :host([last]) { background-size: 1px 8px; }
                :host([first]) { background-position: 8px 8px; }
                .row { display: flex; align-items: center; height: 15px; padding-left: 4px; }
                .row > button, .row > i { width: 9px; height: 9px; box-sizing: border-box; flex: none; }
                button { display: grid; place-items: center; border: 1px solid #aaa; padding: 0; background: #fff; }
                .link { width: 4px; flex: none; border-top: 1px dotted #aaa; }
                .icon { display: flex; width: 14px; margin-right: 3px; }
                .leaf { background: linear-gradient(#aaa, #aaa) 4px 4px / 5px 1px no-repeat; }
                .label { padding: 0 1px; white-space: nowrap; color: #222; line-height: 13px; }
                .kids { display: block; padding-left: 16px; }
                :host([closed]) .kids { display: none; }
                :host([selected]) .label { background: #1373c8; color: #fff; }
                .note { color: #7a2530; padding-left: 2px; white-space: nowrap; }
            </style>
            <div class="row">
                ${parent ? `<button aria-label="Toggle"><svg width="5" height="5"><path d="${this.hasAttribute('closed') ? 'M0 2.500h5M2.500 0v5' : 'M0 2.500h5'}" stroke="#444"/></svg></button>` : '<i class="leaf"></i>'}
                <span class="link"></span>
                <span class="icon"><ui-icon name="${this.getAttribute('icon')}"></ui-icon></span>
                <span class="label">${this.getAttribute('label')}</span>
                ${this.hasAttribute('note') ? `<span class="note">${this.getAttribute('note')}</span>` : ''}
                ${this.hasAttribute('error') ? '<ui-icon name="error"></ui-icon>' : ''}
            </div>
            <div class="kids"><slot></slot></div>
        `;
    }
}
customElements.define('tree-item', TreeItem);

class ModelBrowser extends HTMLElement {
    constructor() {
        super();
        this.attachShadow({mode: 'open'}).innerHTML = `
            <style>
                :host { display: flex; flex-direction: column; background: #fdfdfd; border-right: 2px solid #aaa; min-width: 0; }
                .tabs { display: flex; height: 19px; background: #d8d8d8; border-bottom: 1px solid #aaa; align-items: stretch; font-size: 9px; }
                .tabs > button { border: 0; padding: 0 2px; margin-right: 3px; background: none; font: inherit; color: #888; white-space: nowrap; }
                .tabs > .on { display: flex; align-items: center; gap: 7px; background: #f0f0f0; color: #333; margin-right: 0; padding-right: 6px; }
                .menu { margin-left: auto; }
                .tree { flex: 1; border-left: 1px solid #888; border-bottom: 1px solid #999; padding: 0 0 0 1px; }
            </style>
            <div class="tabs" role="tablist">
                <button role="tab">Model</button>
                <button role="tab" class="on" aria-selected="true">Nastran Model Tree <ui-icon name="closeSm"></ui-icon></button>
                <button role="tab">Nastran Output</button>
                <button role="tab">Nastran File</button>
                <tool-button fit icon="plusThin" label="Add tab"></tool-button>
                <tool-button class="menu" icon="menu" label="Browser menu"></tool-button>
            </div>
            <div class="tree">
                <tree-item first open icon="cube" label="Part">
                    <tree-item open last selected icon="study" label="Analysis 1" note="[Linear Static]">
                        <tree-item icon="units" label="Units : CAD Model"></tree-item>
                        <tree-item icon="node" label="Nodes 0"></tree-item>
                        <tree-item icon="element" label="Elements 0"></tree-item>
                        <tree-item open icon="connectorSm" label="Connectors">
                            <tree-item open last icon="connectorSm" label="Connector 1">
                                <tree-item last icon="materialSm" label="Generic"></tree-item>
                            </tree-item>
                        </tree-item>
                        <tree-item icon="cube" label="Part 1"></tree-item>
                        <tree-item icon="struct" label="Idealizations"></tree-item>
                        <tree-item error icon="meshModel" label="Mesh Model"></tree-item>
                        <tree-item open icon="papers" label="Subcases">
                            <tree-item open last icon="papers" label="Subcase 1">
                                <tree-item open icon="loads" label="Loads">
                                    <tree-item last icon="load1" label="Load 1"></tree-item>
                                </tree-item>
                                <tree-item open icon="support" label="Constraints">
                                    <tree-item last icon="support" label="Fixed"></tree-item>
                                </tree-item>
                                <tree-item open last icon="results" label="Results">
                                    <tree-item icon="results" label="von Mises"></tree-item>
                                    <tree-item icon="mesh" label="Displacement"></tree-item>
                                    <tree-item icon="mesh" label="Safety Factor"></tree-item>
                                    <tree-item last icon="mesh" label="Deformed"></tree-item>
                                </tree-item>
                            </tree-item>
                        </tree-item>
                        <tree-item last icon="xy" label="XY Plot"></tree-item>
                    </tree-item>
                </tree-item>
                <tree-item closed icon="struct" label="Model"></tree-item>
                <tree-item icon="param" label="Parameters"></tree-item>
                <tree-item closed last icon="coords" label="Coordinate Systems"></tree-item>
            </div>
        `;
    }
}
customElements.define('model-browser', ModelBrowser);

// ---------- viewport ----------
class RodScene extends HTMLElement {
    constructor() {
        super();
        this.attachShadow({mode: 'open'}).innerHTML = `
            <style>
                :host { display: block; overflow: hidden; }
                svg { display: block; width: 100%; height: 100%; font-family: "Open Sans", sans-serif; }
            </style>
            <svg viewBox="387 117 893 562" preserveAspectRatio="xMinYMin slice">
                <defs>
                    <linearGradient id="r1" gradientUnits="userSpaceOnUse" x1="625" y1="331" x2="644" y2="311">
                        <stop offset="0" stop-color="#000098"/><stop offset=".3" stop-color="#000072"/><stop offset=".6" stop-color="#00009c"/><stop offset="1" stop-color="#000098"/>
                    </linearGradient>
                    <linearGradient id="r2" gradientUnits="userSpaceOnUse" x1="920" y1="348" x2="938" y2="378">
                        <stop offset="0" stop-color="#0000b4"/><stop offset=".35" stop-color="#0000a6"/><stop offset=".62" stop-color="#00007c"/><stop offset="1" stop-color="#0000b8"/>
                    </linearGradient>
                    <linearGradient id="r3" gradientUnits="userSpaceOnUse" x1="1205" y1="560" x2="1199" y2="583">
                        <stop offset="0" stop-color="#00007c"/><stop offset=".3" stop-color="#000078"/><stop offset=".7" stop-color="#0000ae"/><stop offset="1" stop-color="#0000a8"/>
                    </linearGradient>
                    <linearGradient id="teal" x1="0" y1="0" x2="1" y2="1">
                        <stop offset="0" stop-color="#0f8f82"/><stop offset="1" stop-color="#0a665e"/>
                    </linearGradient>
                    <linearGradient id="cone" x1="0" y1="0" x2="1" y2="1">
                        <stop offset="0" stop-color="#0a8f0a"/><stop offset=".5" stop-color="#0b7f0b"/><stop offset=".7" stop-color="#06a006"/><stop offset="1" stop-color="#08a808"/>
                    </linearGradient>
                </defs>
                <g fill="url(#teal)">
                    <path d="M1132 183l3-9 7-3 7 3 3-1 13 21v6l-22-2-6 1-5-7z"/>
                    <path d="M1164 190l6-7 6-1 7 6v14h-19z"/>
                    <path d="M1165 236l18-5-1 27-4 1-1 10-22-8 6-12z"/>
                    <path d="M1183 230l12-8v12z"/>
                </g>
                <path d="M1143 173l9 0 13 21v6l-13-3z" fill="#0c766c"/>
                <path d="M785 473l-13-13 12-8 76 15 60 17 285 76 75 20v23l-167-43-230-60z" fill="url(#r3)"/>
                <path d="M771 438L1187 185c10-4 20 2 22 12 2 9-2 20-9 24L822 448l-50 22z" fill="url(#r2)"/>
                <path d="M411 117h39l321 321 12 22-18 10z" fill="url(#r1)"/>
                <ellipse cx="772" cy="459" rx="17" ry="16" fill="#0000a0"/>
                <ellipse cx="776" cy="448" rx="9" ry="5" fill="none" stroke="#000070"/>
                <path d="M764 450l11 10" stroke="#e01818" stroke-width="3"/>
                <path d="M876 377l3-5 3-2 2 4 4 2-3 4-2 3-4-1z" fill="none" stroke="#000030"/>
                <path d="M672 379l45 45" stroke="#90e890"/>
                <path d="M665 376l6 3 2-3" fill="none" stroke="#667"/><path d="M669 379h4" stroke="#dddd30" stroke-width="2"/>
                <path d="M704 428l13-13 12-2 9 7v28l-26-1-8-8z" fill="url(#cone)"/>
                <path d="M1199 221l9-18 10 6-1 17-9 4z" fill="#0c776c"/>
                <circle cx="1221" cy="228" r="14" fill="#0d8c80"/>

                <g stroke="#888" stroke-dasharray="5 1">
                    <path d="M1216 157l14 11-13 40-14-21z" fill="#dedee2" fill-opacity=".9"/>
                    <path d="M1216 157l19 4 28 20-33-13z" fill="#efefef"/>
                    <path d="M1230 168l33 13-16 33-27-9z" fill="#dfdfe2"/>
                </g>
                <path d="M1203 187l14 22-3-17z" fill="#8080c8" opacity=".6"/>
                <text transform="translate(1255 195) rotate(192)" font-size="8" font-weight="bold" fill="#777">BOTTOM</text>
                <text transform="translate(1214 191) rotate(-66)" font-size="8" fill="#777">LEFT</text>

                <rect x="787" y="450" width="75" height="17" fill="#fff" stroke="#222"/>
                <path d="M782 458h8" stroke="#fff" stroke-width="3"/>
                <path d="M773 459l6-4v8z" fill="#fff"/>
                <text x="788" y="462" font-size="10" fill="#111">Max:1.639E-02</text>

                <g font-size="10">
                    <path d="M431 635l7-14" stroke="#223a80"/><path d="M431 635l16 4" stroke="#a02020"/><path d="M431 635l-6-5" stroke="#90e090"/>
                    <path d="M433 621l8-7 1 9z" fill="#101080"/><path d="M443 634l8 6-9 4z" fill="#900f14"/><circle cx="424" cy="629" r="5" fill="#0a9a1a"/>
                    <text x="440" y="612" fill="#3030c0">Z</text><text x="416" y="627" fill="#50d860">Y</text><text x="452" y="647" fill="#d82848">X</text>
                </g>
            </svg>
        `;
    }
}
customElements.define('rod-scene', RodScene);

class ContourLegend extends HTMLElement {
    constructor() {
        super();
        const max = 0.0163907;
        const steps = 24;
        const labels = Array.from({length: steps + 1}, (_, i) => (max * (steps - i) / steps).toFixed(3));
        this.attachShadow({mode: 'open'}).innerHTML = `
            <style>
                :host { display: flex; gap: 9px; height: 455px; font-family: "Open Sans", sans-serif; font-size: 10px; line-height: 18px; color: #222; }
                .bar { display: flex; flex-direction: column; width: 16px; margin: 12px 0 6px; background: linear-gradient(#e80000 5%, #f05010 15%, #ff8800 22%, #f0b000 29%, #ffe800 35%, #f0ff00 40%, #70ff00 53%, #10ff10 60%, #00ff60 67%, #00ffff 81%, #00a8f0 87%, #0040ff 95%, #0000f4); }
                .bar i { flex: 1; border-bottom: 1px solid #8a8a70; opacity: .7; }
                .bar i:last-child { border: 0; }
                .nums { display: flex; flex-direction: column; justify-content: space-between; }
            </style>
            <div class="bar">${'<i></i>'.repeat(steps)}</div>
            <div class="nums">${labels.map((v) => `<span>${v}</span>`).join('')}</div>
        `;
    }
}
customElements.define('contour-legend', ContourLegend);

class NavBar extends HTMLElement {
    constructor() {
        super();
        this.attachShadow({mode: 'open'}).innerHTML = `
            <style>
                :host { display: flex; flex-direction: column; align-items: center; box-sizing: border-box; width: 29px; height: 193px; border: 1px solid #bbb; border-radius: 5px; background: #f1f1f1; justify-content: space-between; padding: 1px 0; color: #888; }
                .end { align-self: flex-end; width: 14px; }
                hr { width: 22px; margin: 0; border: 0; border-top: 1px solid #ccc; }
                tool-button[icon="caretSm"] { height: 6px; }
            </style>
            <tool-button class="end" icon="dot" label="Close bar"></tool-button>
            <tool-button icon="steer" label="Full navigation wheel"></tool-button>
            <tool-button icon="caretSm" label="Wheel options"></tool-button>
            <hr>
            <tool-button icon="hand" label="Pan"></tool-button>
            <tool-button icon="zoom" label="Zoom"></tool-button>
            <tool-button icon="caretSm" label="Zoom options"></tool-button>
            <tool-button icon="orbit" label="Orbit"></tool-button>
            <tool-button icon="caretSm" label="Orbit options"></tool-button>
            <tool-button icon="look" label="Look at"></tool-button>
            <tool-button class="end" icon="dot" label="Bar options"></tool-button>
        `;
    }
}
customElements.define('nav-bar', NavBar);

class ModelViewport extends HTMLElement {
    constructor() {
        super();
        this.attachShadow({mode: 'open'}).innerHTML = `
            <style>
                :host { display: grid; grid-template: minmax(0, 1fr) / minmax(0, 1fr); background: #fdfdfd; min-height: 0; overflow: hidden; }
                :host > * { grid-area: 1 / 1; min-height: 0; }
                rod-scene, .hud { grid-area: 1 / 1; min-height: 0; }
                .hud { display: flex; justify-content: space-between; }
                .left { display: flex; flex-direction: column; padding: 12px 0 0 13px; }
                .filters { display: flex; gap: 2px; }
                .filters ui-select { height: 18px; border: 1px solid #c4c4c4; background: rgba(238, 238, 238, .7); color: #444; }
                .filters tool-button { box-sizing: border-box; width: 17px; border: 1px solid #aaa; background: #eee; }
                contour-legend { margin-left: -1px; }
                .summary { margin: 19px 0 0 86px; font: 10px/18px "Open Sans", sans-serif; color: #111; }
                p { margin: 0; }
                .right { display: flex; flex-direction: column; align-items: flex-end; gap: 99px; }
                .win { display: flex; height: 16px; padding-top: 1px; }
                .win tool-button { width: 17px; }
            </style>
            <rod-scene></rod-scene>
            <div class="hud">
                <div class="left">
                    <div class="filters">
                        <ui-select arrow="chevron" label="Result" value="Displacement" style="width: 83px"></ui-select>
                        <ui-select arrow="chevron" label="Component" value="TOTAL" style="width: 51px"></ui-select>
                        <ui-select arrow="chevron" label="Units" value="in" style="width: 31px"></ui-select>
                        <tool-button icon="gears" label="Plot settings"></tool-button>
                    </div>
                    <contour-legend></contour-legend>
                    <div class="summary">
                        <p>CONTOUR: DISPLACEMENT (in) (TOTAL)</p>
                        <p>DEFORMED TOTAL: (MIN=0, MAX=0.0163907)</p>
                        <p>OUTPUT SET: SUBCASE 1</p>
                    </div>
                </div>
                <div class="right">
                    <div class="win"><tool-button icon="tile" label="Tile"></tool-button><tool-button icon="close" label="Close view"></tool-button></div>
                    <nav-bar></nav-bar>
                </div>
            </div>
        `;
    }
}
customElements.define('model-viewport', ModelViewport);

// ---------- bottom bars ----------
class DocumentTabs extends HTMLElement {
    constructor() {
        super();
        this.attachShadow({mode: 'open'}).innerHTML = `
            <style>
                :host { display: flex; height: 20px; background: #d8d8d8; align-items: stretch; }
                .doc { display: flex; align-items: center; gap: 5px; padding: 0 6px; margin-left: 2px; border: 0; border-bottom: 2px solid #3aa5cf; background: #efefef; font: inherit; color: #2f8fbb; }
                .menu { margin-left: auto; }
            </style>
            <tool-button icon="home" label="Home"></tool-button>
            <button class="doc">Connector Rod.ipt <ui-icon name="closeSm"></ui-icon></button>
            <tool-button class="menu" icon="menu" label="Document list"></tool-button>
        `;
    }
}
customElements.define('document-tabs', DocumentTabs);

class StatusBar extends HTMLElement {
    constructor() {
        super();
        this.attachShadow({mode: 'open'}).innerHTML = `
            <style>
                :host { display: flex; height: 21px; box-sizing: border-box; background: #ececec; border-bottom: 1px solid #111; align-items: center; color: #333; }
                .msg { flex: 1; padding: 1px 0 0 1px; }
                .cell { box-sizing: border-box; width: 32px; border-left: 1px solid #d8d8d8; padding: 1px 6px 0; line-height: 19px; }
            </style>
            <span class="msg"><slot></slot></span>
            <span class="cell">1</span>
            <span class="cell">1</span>
        `;
    }
}
customElements.define('status-bar', StatusBar);

class InventorApp extends HTMLElement {
    constructor() {
        super();
        this.attachShadow({mode: 'open'}).innerHTML = `
            <style>
                :host { display: flex; flex-direction: column; height: 100vh; background: #f4f4f4; }
                main { display: grid; flex: 1; min-height: 0; grid-template-columns: 385px minmax(0, 1fr); gap: 2px; }
                .view { display: grid; grid-template-rows: minmax(0, 1fr) auto; min-height: 0; }
            </style>
            <title-bar></title-bar>
            <ribbon-tabs></ribbon-tabs>
            <ribbon-bar></ribbon-bar>
            <main>
                <model-browser></model-browser>
                <div class="view">
                    <model-viewport></model-viewport>
                    <document-tabs></document-tabs>
                </div>
            </main>
            <status-bar>Free rotation (click when cursor shows rotate to center view)</status-bar>
        `;
    }
}
customElements.define('inventor-app', InventorApp);
</script>
</body>
</html>
